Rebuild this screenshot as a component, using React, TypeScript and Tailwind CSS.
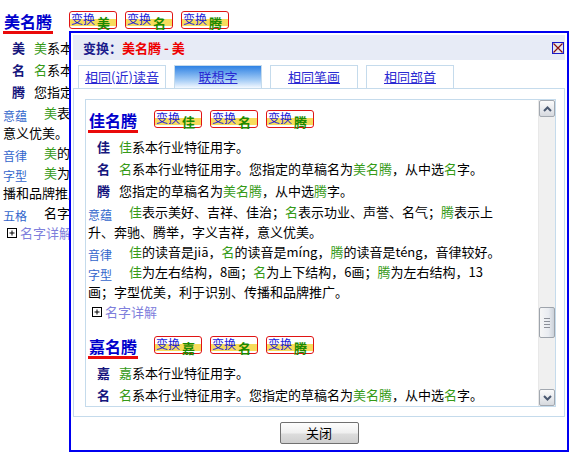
import { Fragment, type ReactNode } from "react";

const G = ({ children }: { children: ReactNode }) => (
  <span className="text-[#359a16]">{children}</span>
);

interface Row {
  label: string;
  text: ReactNode;
}

interface Para {
  label: string;
  lines: ReactNode[];
}

interface NameData {
  name: string;
  swaps: string[];
  rows: Row[];
  paras: Para[];
}

function makeRows(first: string): Row[] {
  return [
    {
      label: first,
      text: (
        <>
          <G>{first}</G>系本行业特征用字。
        </>
      ),
    },
    {
      label: "名",
      text: (
        <>
          <G>名</G>系本行业特征用字。您指定的草稿名为<G>美名腾</G>，从中选
          <G>名</G>字。
        </>
      ),
    },
    {
      label: "腾",
      text: (
        <>
          您指定的草稿名为<G>美名腾</G>，从中选<G>腾</G>字。
        </>
      ),
    },
  ];
}

// page behind the dialog
const PAGE: NameData = {
  name: "美名腾",
  swaps: ["美", "名", "腾"],
  rows: makeRows("美"),
  paras: [
    {
      label: "意蕴",
      lines: [
        <>
          <G>美</G>表示美好、漂亮、美丽；<G>名</G>表示功业、声誉、名气；
          <G>腾</G>表示上升、奔驰、腾举，字义吉祥，
        </>,
        "意义优美。",
      ],
    },
    {
      label: "音律",
      lines: [
        <>
          <G>美</G>的读音是měi，<G>名</G>的读音是míng，<G>腾</G>
          的读音是téng，音律较好。
        </>,
      ],
    },
    {
      label: "字型",
      lines: [
        <>
          <G>美</G>为上下结构，9画；<G>名</G>为上下结构，6画；<G>腾</G>
          为左右结构，13画；字型优美，利于识别、传
        </>,
        "播和品牌推广。",
      ],
    },
    { label: "五格", lines: ["名字五格数理吉祥，总格大吉。"] },
  ],
};

function makeParas(first: string, strokes: string): Para[] {
  return [
    {
      label: "意蕴",
      lines: [
        <>
          <G>{first}</G>表示美好、吉祥、佳治；<G>名</G>
          表示功业、声誉、名气；<G>腾</G>表示上
        </>,
        "升、奔驰、腾举，字义吉祥，意义优美。",
      ],
    },
    {
      label: "音律",
      lines: [
        <>
          <G>{first}</G>的读音是jiā，<G>名</G>的读音是míng，<G>腾</G>
          的读音是téng，音律较好。
        </>,
      ],
    },
    {
      label: "字型",
      lines: [
        <>
          <G>{first}</G>为左右结构，{strokes}画；<G>名</G>为上下结构，6画；
          <G>腾</G>为左右结构，13
        </>,
        "画；字型优美，利于识别、传播和品牌推广。",
      ],
    },
  ];
}

const SUGGESTIONS: NameData[] = [
  {
    name: "佳名腾",
    swaps: ["佳", "名", "腾"],
    rows: makeRows("佳"),
    paras: makeParas("佳", "8"),
  },
  {
    name: "嘉名腾",
    swaps: ["嘉", "名", "腾"],
    rows: makeRows("嘉"),
    paras: makeParas("嘉", "14"),
  },
];

const TABS = ["相同(近)读音", "联想字", "相同笔画", "相同部首"];

function SwapButton({ char }: { char: string }) {
  return (
    <span className="flex h-[18px] w-[48px] items-start rounded-[3px] border border-[#e01414] bg-[linear-gradient(to_bottom,#ffffff_0%,#ffffff_46%,#f7dc5c_46%,#f7dc5c_90%,#ffffff_90%)] pl-[1px]">
      <span className="text-[12px] leading-[13px] text-[#1a1ad6]">变换</span>
      <span className="ml-[2px] mt-[4px] text-[13px] font-bold leading-[13px] text-[#1c8a00]">
        {char}
      </span>
    </span>
  );
}

function PlusBox() {
  return (
    <svg width="10" height="10" viewBox="0 0 10 10">
      <rect x="0.5" y="0.5" width="9" height="9" fill="#fff" stroke="#000" />
      <path d="M2.5 5h5M5 2.5v5" stroke="#000" />
    </svg>
  );
}

function NameBlock({ data }: { data: NameData }) {
  return (
    <div className="whitespace-nowrap text-[13px] text-black">
      <div className="flex items-start">
        <span className="border-b-[3px] border-[#ea0a0a] px-px text-[16px] font-bold leading-[20px] text-[#0000cc]">
          {data.name}
        </span>
        <div className="ml-[16px] flex gap-[8px]">
          {data.swaps.map((c) => (
            <SwapButton key={c} char={c} />
          ))}
        </div>
      </div>
      <div className="mt-[3px]">
        {data.rows.map((r) => (
          <div key={r.label} className="flex h-[22px] items-center pl-[9px]">
            <span className="w-[22px] shrink-0 font-bold text-[#16167c]">
              {r.label}
            </span>
            <span>{r.text}</span>
          </div>
        ))}
      </div>
      {data.paras.map((p) => (
        <div key={p.label} className="leading-[20px]">
          <span className="inline-block w-[41px] align-[-3px] text-[12px] leading-[14px] text-[#3366cc]">
            {p.label}
          </span>
          {p.lines.map((line, i) => (
            <Fragment key={i}>
              {i > 0 && <br />}
              {line}
            </Fragment>
          ))}
        </div>
      ))}
      <div className="flex h-[20px] items-center gap-[3px] pl-[4px] text-[#7f7fdc]">
        <PlusBox />
        <span>名字详解</span>
      </div>
    </div>
  );
}

function Chevron({ up }: { up: boolean }) {
  return (
    <svg width="9" height="6" viewBox="0 0 9 6">
      <path
        d={up ? "M1 5L4.5 1.5L8 5" : "M1 1L4.5 4.5L8 1"}
        fill="none"
        stroke="#4a5870"
        strokeWidth="2"
      />
    </svg>
  );
}

function ScrollButton({ up }: { up: boolean }) {
  return (
    <div className="flex h-[17px] shrink-0 items-center justify-center rounded-[2px] border border-[#a2a8b0] bg-[linear-gradient(to_bottom,#fbfbfb,#e6e8ec_60%,#d6d9de)]">
      <Chevron up={up} />
    </div>
  );
}

function Scrollbar() {
  return (
    <div className="flex w-[17px] shrink-0 flex-col border-l border-[#e8e8e8] bg-[#f0f0f0]">
      <ScrollButton up />
      <div className="h-[190px] shrink-0" />
      <div className="flex h-[31px] shrink-0 flex-col items-center justify-center gap-[2px] rounded-[2px] border border-[#9ea4ac] bg-[linear-gradient(to_right,#f6f6f6,#e9ecf1_60%,#ccd2da)]">
        <span className="h-px w-[6px] bg-[#8c9098]" />
        <span className="h-px w-[6px] bg-[#8c9098]" />
        <span className="h-px w-[6px] bg-[#8c9098]" />
        <span className="h-px w-[6px] bg-[#8c9098]" />
      </div>
      <div className="flex-1" />
      <ScrollButton up={false} />
    </div>
  );
}

function CloseIcon() {
  return (
    <svg width="12" height="12" viewBox="0 0 12 12">
      <rect x="0.5" y="0.5" width="11" height="11" fill="#e6e6ee" stroke="#1a1ac8" />
      <path d="M1.5 1.5L10.5 10.5M10.5 1.5L1.5 10.5" stroke="#8a1010" strokeWidth="1.2" />
    </svg>
  );
}

function SwapDialog() {
  return (
    <div className="absolute left-[69px] top-[31px] flex h-[421px] w-[500px] flex-col border-2 border-[#0000f0] bg-white p-[2px]">
      <div className="flex h-[25px] shrink-0 items-center justify-between bg-[#e7ebf6] pl-[10px] pr-px">
        <span className="text-[13px] font-bold">
          <span className="text-[#1c1c8c]">变换：</span>
          <span className="text-[#ee0000]">美名腾 - 美</span>
        </span>
        <CloseIcon />
      </div>

      <div className="mt-[5px] flex h-[23px] shrink-0 gap-[8px] pl-[5px]">
        {TABS.map((tab, i) => (
          <div
            key={tab}
            className={
              i === 1
                ? "flex w-[88px] justify-center border border-b-0 border-[#c5dbec] bg-[linear-gradient(to_bottom,#2f82e4,#a6cdf6_65%,#f4f9ff)] pt-[3px]"
                : "flex w-[88px] justify-center border border-b-0 border-[#c5dbec] bg-white pt-[3px]"
            }
          >
            <span className="text-[13px] leading-[16px] text-[#2a2ad2] underline">
              {tab}
            </span>
          </div>
        ))}
      </div>

      <div className="flex h-[329px] shrink-0 border border-[#c5dbec] pb-[9px] pl-[11px] pr-[8px] pt-[10px]">
        <div className="flex min-w-0 flex-1 overflow-hidden border border-[#c5dbec]">
          <div className="min-w-0 flex-1 overflow-hidden pl-[2px] pt-[10px]">
            <div className="flex flex-col gap-[14px]">
              {SUGGESTIONS.map((s) => (
                <NameBlock key={s.name} data={s} />
              ))}
            </div>
          </div>
          <Scrollbar />
        </div>
      </div>

      <div className="mt-[5px] flex justify-center">
        <button className="h-[22px] w-[79px] rounded-[2px] border border-[#707070] bg-[linear-gradient(to_bottom,#fdfdfd,#efefef_50%,#dcdcdc_55%,#cfcfcf)] text-[13px] leading-[20px] text-black">
          关闭
        </button>
      </div>
    </div>
  );
}

export default function App() {
  return (
    <div className="relative h-[455px] w-[572px] overflow-hidden bg-white font-['Noto_Sans_CJK_SC','Noto_Sans',sans-serif]">
      <div className="pl-[3px] pt-[11px]">
        <NameBlock data={PAGE} />
      </div>
      <SwapDialog />
    </div>
  );
}
